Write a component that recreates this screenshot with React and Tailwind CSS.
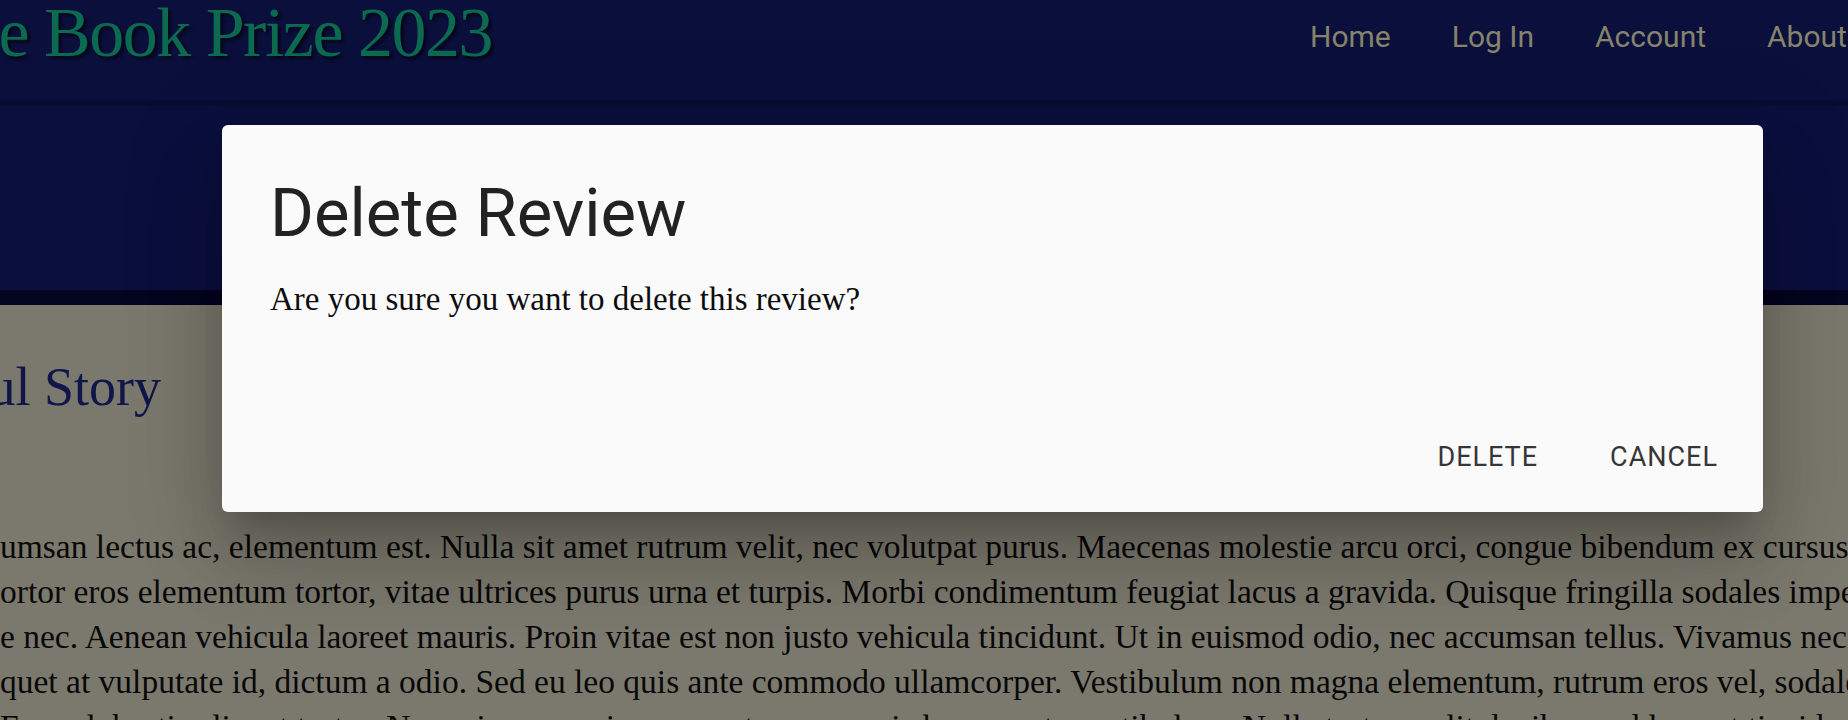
import React from 'react';

const navLinks = ['Home', 'Log In', 'Account', 'About'];

const bodyLines = [
  'umsan lectus ac, elementum est. Nulla sit amet rutrum velit, nec volutpat purus. Maecenas molestie arcu orci, congue bibendum ex cursus sit amet.',
  'ortor eros elementum tortor, vitae ultrices purus urna et turpis. Morbi condimentum feugiat lacus a gravida. Quisque fringilla sodales imperdiet.',
  'e nec. Aenean vehicula laoreet mauris. Proin vitae est non justo vehicula tincidunt. Ut in euismod odio, nec accumsan tellus. Vivamus nec risus.',
  'quet at vulputate id, dictum a odio. Sed eu leo quis ante commodo ullamcorper. Vestibulum non magna elementum, rutrum eros vel, sodales nisl.',
  'Fusce lobortis aliquet tortor. Nam viverra orci ac quam tempus, quis lacus porta vestibulum. Nulla tortor, velit dapibus sed laoreet tincidunt tellus.',
];

function DeleteDialog() {
  return (
    <div className="absolute left-[222px] top-[125px] w-[1541px] h-[387px] bg-[#fafafa] rounded-[6px] flex flex-col pl-[48px] pt-[55px] shadow-[0_22px_30px_-14px_rgba(0,0,0,0.2),0_48px_76px_6px_rgba(0,0,0,0.14),0_18px_92px_16px_rgba(0,0,0,0.12)]">
      <h2 className="font-[Roboto,sans-serif] text-[67px] leading-none text-[#222222] whitespace-nowrap">
        Delete Review
      </h2>
      <p className="mt-[36px] font-['Liberation_Serif',serif] text-[33px] leading-none text-[#0d0d0d] whitespace-nowrap">
        Are you sure you want to delete this review?
      </p>
      <div className="mt-auto flex justify-end gap-[72px] pr-[45px] pb-[41px]">
        <button className="font-[Roboto,sans-serif] text-[27px] leading-none tracking-[1px] text-[#363636]">
          DELETE
        </button>
        <button className="font-[Roboto,sans-serif] text-[27px] leading-none tracking-[1px] text-[#363636]">
          CANCEL
        </button>
      </div>
    </div>
  );
}

function App() {
  return (
    <div className="relative w-full h-screen overflow-hidden bg-[#7b796d]">
      <header className="h-[100px] bg-[#0b0f3c] flex items-start">
        <div className="w-[492px] shrink-0 flex justify-end -mt-[2px]">
          <h1 className="font-['Liberation_Serif',serif] text-[70px] leading-none tracking-[-1.5px] text-[#0c6a50] whitespace-nowrap [text-shadow:3px_3px_3px_rgba(0,0,0,0.55)]">
            e Book Prize 2023
          </h1>
        </div>
        <nav className="ml-[818px] mt-[22px] flex gap-[61px] whitespace-nowrap">
          {navLinks.map(link => (
            <a key={link} className="font-[Roboto,sans-serif] text-[30px] leading-none text-[#86836c]">
              {link}
            </a>
          ))}
        </nav>
      </header>
      <div className="h-[190px] bg-[#0b0f3e] border-t-[6px] border-[#090c32]" />
      <div className="h-[15px] bg-[#04051f]" />

      <main className="pt-[55px]">
        <div className="w-[161px] flex justify-end">
          <h3 className="font-['Liberation_Serif',serif] text-[54px] leading-none text-[#10164a] whitespace-nowrap">
            ul Story
          </h3>
        </div>
        <div className="mt-[110px] font-['Liberation_Serif',serif] text-[33.5px] leading-[45px] text-[#080808]">
          {bodyLines.map((line, i) => (
            <div key={i} className="whitespace-nowrap">{line}</div>
          ))}
        </div>
      </main>

      <DeleteDialog />
    </div>
  );
}

export default App;
